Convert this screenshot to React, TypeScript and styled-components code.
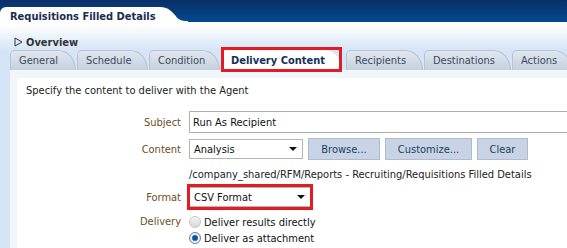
import React from 'react';
import styled, { createGlobalStyle } from 'styled-components';

const GlobalStyle = createGlobalStyle`
  html, body {
    margin: 0;
    padding: 0;
    background: #ffffff;
  }
  body {
    font-family: "DejaVu Sans Condensed", "Liberation Sans", Arial, sans-serif;
    font-size: 11px;
    color: #222;
  }
`;

const Page = styled.div`
  width: 567px;
  height: 248px;
  overflow: hidden;
  display: flex;
  flex-direction: column;
`;

const TitleBar = styled.div`
  height: 22px;
  flex: none;
  display: flex;
  align-items: flex-end;
  background: linear-gradient(#0a2f68, #004b8f);
`;

const TitleTab = styled.div`
  height: 15px;
  width: 150px;
  padding: 0 0 0 10px;
  background: #ffffff;
  border-top-left-radius: 6px;
  font-weight: bold;
  font-size: 11px;
  line-height: 20px;
  white-space: nowrap;
  color: #1c2c4f;
`;

const TitleCurve = styled.svg`
  display: block;
`;

const Header = styled.div`
  height: 28px;
  flex: none;
  background: linear-gradient(#ffffff 10%, #d5e5f7);
  display: flex;
  align-items: flex-end;
  padding: 0 0 1px 14px;
  box-sizing: border-box;
`;

const Overview = styled.div`
  display: flex;
  align-items: center;
  gap: 3px;
  height: 14px;
  font-weight: bold;
  font-size: 11px;
  color: #333;
`;

const TabStrip = styled.div`
  height: 20px;
  flex: none;
  background: #d5e5f7;
  display: flex;
  align-items: flex-end;
  padding-left: 10px;
`;

const Tab = styled.div<{ $w: number; $active?: boolean }>`
  position: relative;
  flex: none;
  width: ${({ $w }) => $w}px;
  height: 20px;
  box-sizing: border-box;
  margin-left: ${({ $active }) => ($active ? 1 : 0)}px;
  margin-right: ${({ $active }) => ($active ? 4 : 1)}px;
  padding-left: 8px;
  display: flex;
  align-items: center;
  font-size: 11px;
  white-space: nowrap;
  font-weight: ${({ $active }) => ($active ? 'bold' : 'normal')};
  color: ${({ $active }) => ($active ? '#16305a' : '#3c4a5c')};
  background: ${({ $active }) =>
    $active ? '#ffffff' : 'linear-gradient(#e0e7f0, #c5d0de)'};
  border: 1px solid ${({ $active }) => ($active ? '#ffffff' : '#b7c3d3')};
  border-bottom: none;
  border-radius: 5px 18px 0 0 / 5px 20px 0 0;
`;

const Highlight = styled.div`
  position: absolute;
  left: -2px;
  right: -1px;
  top: -4px;
  bottom: -2px;
  border: 3px solid #e41b23;
  pointer-events: none;
`;

const Body = styled.div`
  flex: 1;
  display: flex;
  background: #d5e5f7;
  padding-left: 10px;
`;

const Panel = styled.div`
  flex: 1;
  background: #f1f6fb;
  padding: 8px 0 0 7px;
`;

const Inner = styled.div`
  height: 100%;
  background: #ffffff;
  padding: 6px 0 0 9px;
  box-sizing: border-box;
`;

const Intro = styled.div`
  height: 14px;
  line-height: 14px;
  margin-bottom: 12px;
  color: #222;
`;

const Row = styled.div<{ $h: number }>`
  height: ${({ $h }) => $h}px;
  display: flex;
  align-items: center;
  gap: 8px;
`;

const Label = styled.div`
  width: 155px;
  flex: none;
  text-align: right;
  color: #6d4f24;
`;

const Controls = styled.div`
  display: flex;
  align-items: center;
  gap: 5px;
`;

const TextInput = styled.div`
  width: 400px;
  height: 22px;
  box-sizing: border-box;
  border: 1px solid #b0b0b0;
  border-right: none;
  padding-left: 3px;
  display: flex;
  align-items: center;
  color: #111;
`;

const Select = styled.div<{ $w: number }>`
  width: ${({ $w }) => $w}px;
  height: 20px;
  box-sizing: border-box;
  border: 1px solid #b5b5b5;
  background: #ffffff;
  padding: 0 5px 0 4px;
  display: flex;
  align-items: center;
  justify-content: space-between;
  color: #111;
`;

const Caret = styled.span`
  width: 0;
  height: 0;
  border-left: 4px solid transparent;
  border-right: 4px solid transparent;
  border-top: 4px solid #111;
`;

const Button = styled.div<{ $w: number }>`
  width: ${({ $w }) => $w}px;
  height: 22px;
  box-sizing: border-box;
  background: #c8d4e6;
  border: 1px solid #aebbd0;
  display: flex;
  align-items: center;
  justify-content: center;
  color: #243c5c;
`;

const PathText = styled.div`
  color: #222;
  white-space: nowrap;
  padding-top: 1px;
`;

const Boxed = styled.div`
  position: relative;
`;

const FormatHighlight = styled.div`
  position: absolute;
  left: -2px;
  right: -2px;
  top: -3px;
  bottom: -3px;
  border: 3px solid #e41b23;
`;

const DeliveryRow = styled.div`
  display: flex;
  gap: 8px;
  margin-top: 4px;
`;

const DeliveryLabel = styled(Label)`
  height: 16px;
  line-height: 16px;
`;

const RadioGroup = styled.div`
  display: flex;
  flex-direction: column;
`;

const RadioRow = styled.div`
  display: flex;
  align-items: center;
  gap: 3px;
  height: 16px;
  color: #111;
`;

const Radio = styled.span<{ $checked?: boolean }>`
  width: 12px;
  height: 12px;
  box-sizing: border-box;
  border-radius: 50%;
  border: 1px solid ${({ $checked }) => ($checked ? '#6f7f90' : '#c6c6c6')};
  background: ${({ $checked }) =>
    $checked
      ? 'radial-gradient(circle, #124f93 0 2px, #4f98d8 3px, #e9eef3 3.5px)'
      : 'linear-gradient(#f4f4f4, #d8d8d8)'};
`;

export default function App() {
  return (
    <Page>
      <GlobalStyle />
      <TitleBar>
        <TitleTab>Requisitions Filled Details</TitleTab>
        <TitleCurve width="28" height="15" viewBox="0 0 28 15">
          <path d="M0 0 C8 0 11 4 15 8 C18 12 20 14 28 14 L28 15 L0 15 Z" fill="#ffffff" />
        </TitleCurve>
      </TitleBar>
      <Header>
        <Overview>
          <svg width="9" height="10" viewBox="0 0 9 10">
            <path d="M1 1 L8 5 L1 9 Z" fill="none" stroke="#333" strokeWidth="1" />
          </svg>
          Overview
        </Overview>
      </Header>
      <TabStrip>
        <Tab $w={66}>General</Tab>
        <Tab $w={71}>Schedule</Tab>
        <Tab $w={71}>Condition</Tab>
        <Tab $w={120} $active>
          Delivery Content
          <Highlight />
        </Tab>
        <Tab $w={77}>Recipients</Tab>
        <Tab $w={87}>Destinations</Tab>
        <Tab $w={60}>Actions</Tab>
      </TabStrip>
      <Body>
        <Panel>
          <Inner>
            <Intro>Specify the content to deliver with the Agent</Intro>
            <Row $h={24}>
              <Label>Subject</Label>
              <TextInput>Run As Recipient</TextInput>
            </Row>
            <Row $h={30}>
              <Label>Content</Label>
              <Controls>
                <Select $w={114}>
                  Analysis
                  <Caret />
                </Select>
                <Button $w={72}>Browse...</Button>
                <Button $w={87}>Customize...</Button>
                <Button $w={51}>Clear</Button>
              </Controls>
            </Row>
            <Row $h={20}>
              <Label />
              <PathText>/company_shared/RFM/Reports - Recruiting/Requisitions Filled Details</PathText>
            </Row>
            <Row $h={26}>
              <Label>Format</Label>
              <Boxed>
                <Select $w={122}>
                  CSV Format
                  <Caret />
                </Select>
                <FormatHighlight />
              </Boxed>
            </Row>
            <DeliveryRow>
              <DeliveryLabel>Delivery</DeliveryLabel>
              <RadioGroup>
                <RadioRow>
                  <Radio />
                  Deliver results directly
                </RadioRow>
                <RadioRow>
                  <Radio $checked />
                  Deliver as attachment
                </RadioRow>
              </RadioGroup>
            </DeliveryRow>
          </Inner>
        </Panel>
      </Body>
    </Page>
  );
}
